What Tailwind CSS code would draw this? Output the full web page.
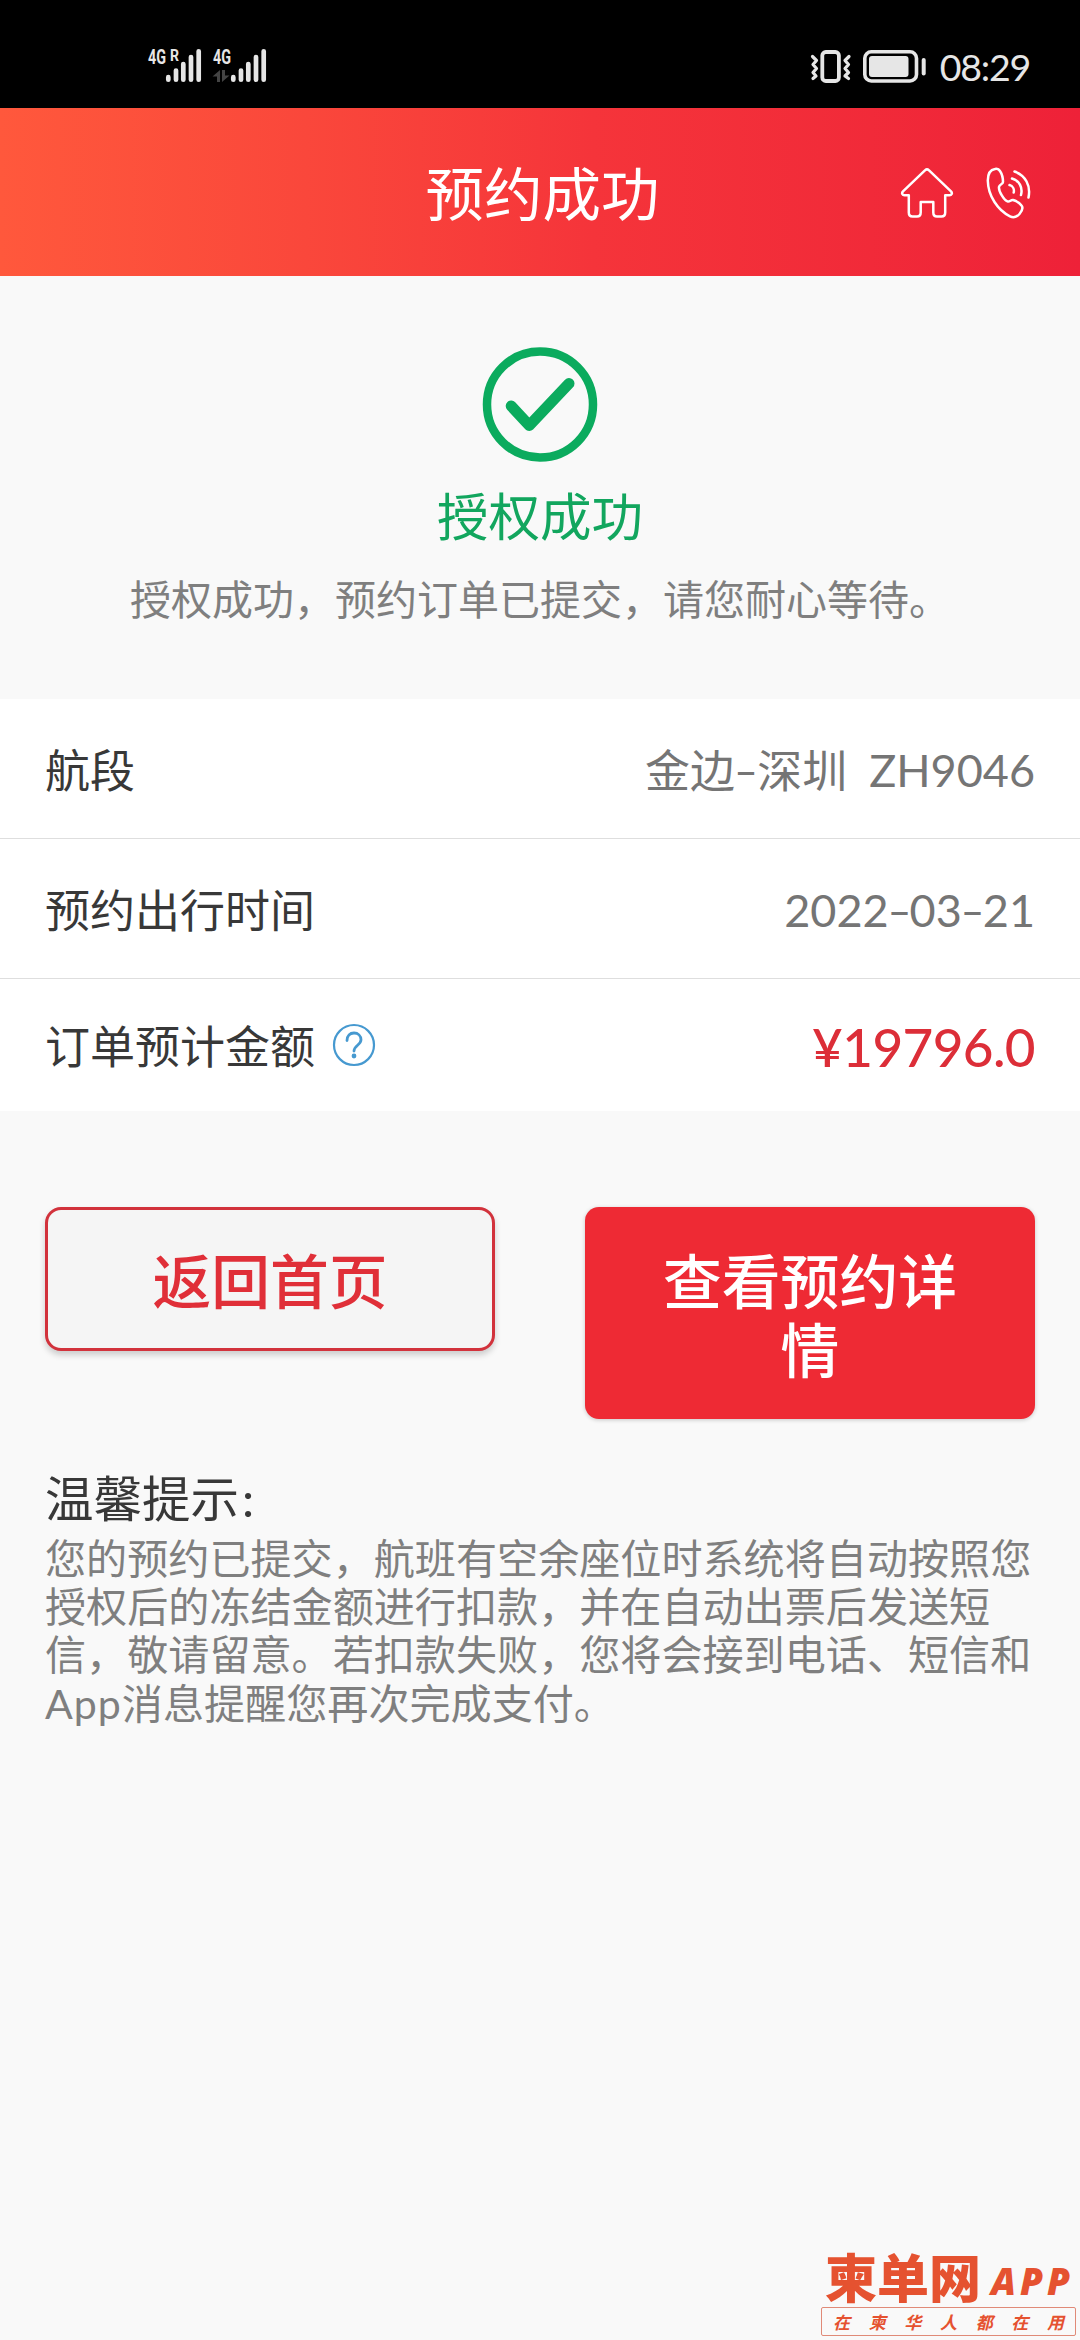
<!DOCTYPE html>
<html lang="zh-CN">
<head>
<meta charset="utf-8">
<meta name="viewport" content="width=device-width, initial-scale=1">
<title>预约成功</title>
<script src="https://cdn.jsdelivr.net/npm/@tailwindcss/browser@4"></script>
</head>
<body class="bg-[#f9f9f9] font-['Lato','Noto_Sans_CJK_SC',sans-serif]">
<div class="relative flex h-[2340px] w-[1080px] flex-col overflow-hidden">

  <!-- Status bar -->
  <div class="flex h-[108px] shrink-0 items-start justify-between bg-black pt-[44px] pr-[50px] pl-[146px]">
    <svg class="h-[44px] w-[124px]" viewBox="0 0 124 44" fill="#e6e6e6" font-family="'Roboto',sans-serif" font-weight="700">
      <text x="2" y="20" font-size="20" textLength="18" lengthAdjust="spacingAndGlyphs">4G</text>
      <text x="24" y="17" font-size="16.500" textLength="9" lengthAdjust="spacingAndGlyphs">R</text>
      <g stroke="#e6e6e6" stroke-width="4.700" stroke-linecap="round">
        <path d="M22.300 33.200v2.500M30 26.500v9.200M37.300 20v15.700M45 13v22.700M52.700 7.300v28.400"/>
        <path d="M87.300 33.200v2.500M95 26.500v9.200M102.300 20v15.700M110 13v22.700M117.700 7.300v28.400"/>
      </g>
      <text x="67" y="20" font-size="20" textLength="18" lengthAdjust="spacingAndGlyphs">4G</text>
      <path fill="#444" d="M74 26v12h-3v-5.500h-4.500zM76 26h3v5.500h4.500L76 38z"/>
    </svg>
    <div class="flex items-start gap-[9px]">
      <svg class="h-[44px] w-[120px] shrink-0" viewBox="0 0 120 44" fill="none" stroke="#e6e6e6">
        <rect x="15.300" y="8" width="16.600" height="29" rx="3.500" stroke-width="3.800"/>
        <path stroke-width="3.200" stroke-linejoin="round" stroke-linecap="round" d="M5.500 12.500l4 4-3.500 4 3.500 4-3.500 4 3 3.500-3 2.500M42 12.500l-4 4 3.500 4-3.500 4 3.500 4-3.500 3.500 3.500 2.500"/>
        <rect x="57.800" y="7.800" width="51.700" height="29.200" rx="6.500" stroke-width="3.600"/>
        <rect x="62" y="12" width="39.500" height="21" rx="3" fill="#e6e6e6" stroke="none"/>
        <rect x="114.700" y="14" width="4" height="17.500" rx="2" fill="#e6e6e6" stroke="none"/>
      </svg>
      <span class="flex h-[46px] w-[94px] shrink-0 items-center justify-end text-[37.500px] leading-none tracking-[-1.200px] text-[#e6e6e6]">08:29</span>
    </div>
  </div>

  <!-- Page header -->
  <header class="grid h-[168px] shrink-0 grid-cols-3 items-center bg-linear-to-r from-[#ff583c] via-[#f5343a] via-55% to-[#ee2138] pt-px">
    <span></span>
    <h1 class="pb-[3px] pl-[5px] text-center font-['Noto_Sans_CJK_SC',sans-serif] text-[58.500px] leading-[80px] whitespace-nowrap text-white">预约成功</h1>
    <div class="flex items-center justify-end gap-[32px] pr-[48px]">
      <svg class="h-[52px] w-[54px]" viewBox="0 0 54 52" fill="none" stroke="#fff" stroke-width="2.500" stroke-linejoin="round" stroke-linecap="round">
        <path d="M25.200 3.200 3 24.300c-1.800 2-.5 4 1.500 4h4.300V45.500c0 2.800 1.200 4 3.700 4h4.500c2.500 0 3.700-1.200 3.700-4V35h12.600v10.500c0 2.800 1.200 4 3.700 4h4.500c2.500 0 3.700-1.200 3.700-4V28.300h4.300c2 0 3.300-2 1.500-4L28.800 3.200c-1.200-1.200-2.400-1.200-3.600 0z"/>
      </svg>
      <svg class="h-[52px] w-[46px]" viewBox="0 0 46 52" fill="none" stroke="#fff" stroke-width="2.500" stroke-linejoin="round" stroke-linecap="round">
        <path d="M9 2c-5 .8-7.200 5-7.200 11.500C2 29 12 43.500 24 49.300c3.500 1.700 7 .5 9.500-2.300 3-3.500 3.600-6.500 2-8.500-2-2.800-5-4.500-8.500-5.500-2-.4-3 1.800-5 1.600-4-1-9.500-10.600-9-14.600.4-3 4-2.500 4-5 0-4-1-8-3-11-1-1.700-3-2.500-5-2z"/>
        <path d="M23.500 18c3.200.8 5 4 4.200 7.500M26 11.500c7.200 2 11 9 9 16.500M28.500 4.500c11 4 16.500 14 14 26"/>
      </svg>
    </div>
  </header>

  <!-- Result -->
  <section class="flex h-[423px] shrink-0 flex-col items-center pt-[70px] font-['Noto_Sans_CJK_SC',sans-serif]">
    <svg class="h-[117px] w-[118px]" viewBox="0 0 118 117" fill="none" stroke="#0bab5e">
      <circle cx="59" cy="58.500" r="53" stroke-width="8.500"/>
      <path d="M30.200 60 48.300 79.500 88 37.500" stroke-width="11" stroke-linecap="round" stroke-linejoin="round"/>
    </svg>
    <p class="mt-[15px] text-[51.500px] leading-[72px] text-[#12a65e]">授权成功</p>
    <p class="mt-[19px] text-[41px] leading-[56px] text-[#7f7f7f]">授权成功，预约订单已提交，请您耐心等待。</p>
  </section>

  <!-- Order details -->
  <dl class="flex shrink-0 flex-col bg-white text-[45px] leading-[60px]">
    <div class="flex h-[140px] items-center justify-between border-b-[1px] border-[#dedede] px-[45px]">
      <dt class="font-['Noto_Sans_CJK_SC',sans-serif] text-[#383838]">航段</dt>
      <dd class="flex items-center text-[#757575]"><span class="font-['Noto_Sans_CJK_SC',sans-serif]">金边</span><span class="flex w-[22px] scale-x-90 justify-center pt-[3px]">–</span><span class="font-['Noto_Sans_CJK_SC',sans-serif]">深圳</span><span class="ml-[22px] pt-[3px]">ZH9046</span></dd>
    </div>
    <div class="flex h-[140px] items-center justify-between border-b-[1px] border-[#dedede] px-[45px]">
      <dt class="font-['Noto_Sans_CJK_SC',sans-serif] text-[#383838]">预约出行时间</dt>
      <dd class="flex pt-[3px] text-[#757575]">2022<span class="flex w-[21px] scale-x-90 justify-center">–</span>03<span class="flex w-[21px] scale-x-90 justify-center">–</span>21</dd>
    </div>
    <div class="flex h-[132px] items-center justify-between px-[45px]">
      <dt class="flex items-center font-['Noto_Sans_CJK_SC',sans-serif] text-[#383838]">订单预计金额
        <svg class="ml-[17px] h-[44px] w-[44px]" viewBox="0 0 44 44" fill="none" stroke="#4699d0" stroke-width="2.200" stroke-linecap="round">
          <circle cx="22" cy="22" r="20"/>
          <path stroke-width="2.800" d="M15 17.500c0-5 3-7.500 7-7.500s7 2.800 7 6.800c0 5.200-7 5.700-7 11.200"/>
          <circle cx="22" cy="33" r="1.300" fill="#4699d0"/>
        </svg>
      </dt>
      <dd class="pt-[4px] text-[53px] font-medium tracking-[-0.600px] text-[#dc2e38]">¥19796.0</dd>
    </div>
  </dl>

  <!-- Actions -->
  <div class="mt-[96px] flex shrink-0 items-start justify-between px-[45px] font-['Noto_Sans_CJK_SC',sans-serif] text-[58.800px] leading-[69px] font-medium">
    <button class="h-[144px] w-[450px] rounded-[16px] border-[3px] border-[#d2323c] bg-[#f5f5f5] pb-[2px] text-[#e02f38] shadow-[0_4px_6px_rgba(0,0,0,0.18)]">返回首页</button>
    <button class="h-[212px] w-[450px] rounded-[14px] bg-[#ee2a34] px-[70px] text-white shadow-[0_1px_4px_rgba(0,0,0,0.2)]">查看预约详情</button>
  </div>

  <!-- Tips -->
  <section class="mt-[42px] px-[45px] font-['Noto_Sans_CJK_SC',sans-serif]">
    <h2 class="h-[71px] text-[48.500px] leading-[70px] text-[#383838]">温馨提示<span class="ml-[3px] font-['Lato']">:</span></h2>
    <p class="text-[41.100px] leading-[48.200px] whitespace-nowrap text-[#7f7f7f]">您的预约已提交，航班有空余座位时系统将自动按照您<br>授权后的冻结金额进行扣款，并在自动出票后发送短<br>信，敬请留意。若扣款失败，您将会接到电话、短信和<br><span class="font-['Lato'] tracking-[1px]">App</span>消息提醒您再次完成支付。</p>
  </section>

  <!-- Watermark over the page corner -->
  <div class="absolute right-[4px] bottom-[4px] flex w-[255px] flex-col font-['Noto_Sans_CJK_SC',sans-serif] text-[#e55230]">
    <div class="flex h-[56px] items-start justify-between pr-[2px] pl-[4px]">
      <span class="text-[52px] leading-[50px] font-black">柬单网</span>
      <span class="pt-[11px] font-['Open_Sans'] text-[37px] leading-[38px] font-extrabold tracking-[4px] italic">APP</span>
    </div>
    <div class="flex h-[29px] items-center justify-between rounded-[2px] border border-[#e08a78] px-[11px] text-[17px] leading-none font-bold italic">
      <span>在</span><span>柬</span><span>华</span><span>人</span><span>都</span><span>在</span><span>用</span>
    </div>
  </div>
</div>
</body>
</html>
